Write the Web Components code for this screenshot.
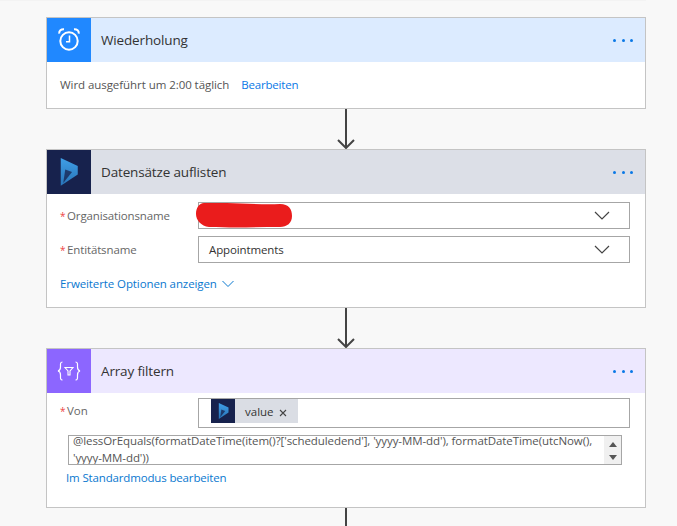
<!DOCTYPE html>
<html><head><meta charset="utf-8"><style>
html,body{margin:0;padding:0}
body{width:677px;height:526px;overflow:hidden;background:#f8f8f8;font-family:"Open Sans","Noto Sans",sans-serif}
</style></head><body>
<flow-canvas>
<flow-card head="#dcebff" iconbg="#2088ff" title="Wiederholung" style="--body-h:46px">
 <svg slot="icon" width="26" height="28" viewBox="0 0 26 28" fill="none" stroke="#fff"><circle cx="13" cy="15" r="8.700" stroke-width="2"/><path d="M13.500 9.500V15.800H10" stroke-width="1.500"/><path d="M3.200 7.600C3 5 5 3 8 3.200M22.800 7.600C23 5 21 3 18 3.200" stroke-width="2"/></svg>
 <schedule-line></schedule-line>
</flow-card>
<flow-arrow></flow-arrow>
<flow-card head="#dcdfe7" iconbg="#17224d" title="Datensätze auflisten" style="--body-h:113px">
 <dyn-logo slot="icon" w="18" h="28"></dyn-logo>
 <form-row label="Organisationsname"><select-box><red-scribble></red-scribble></select-box></form-row>
 <form-row label="Entitätsname" gap="7"><select-box>Appointments</select-box></form-row>
 <more-link></more-link>
</flow-card>
<flow-arrow></flow-arrow>
<flow-card head="#ede8ff" iconbg="#8c66ff" title="Array filtern" style="--body-h:114px">
 <svg slot="icon" width="24" height="20" viewBox="0 0 24 20" fill="none" stroke="#fff" stroke-width="1.200"><path d="M5.500 1C3 1 3.500 3.500 3.500 6 3.500 8.500 3 9.500 1 10c2 .5 2.500 1.500 2.500 4 0 2.500-.5 5 2 5M18.500 1C21 1 20.500 3.500 20.500 6c0 2.500.5 3.500 2.500 4-2 .5-2.500 1.500-2.500 4 0 2.500.5 5-2 5"/><path d="M8 6.500h8l-3 3.500v4h-2v-4z" stroke-width="1.100"/></svg>
 <chip-row></chip-row>
 <expr-box></expr-box>
 <plain-link></plain-link>
</flow-card>
<flow-arrow tail></flow-arrow>
</flow-canvas>
<script>
let gid=0;
function LOGO(w,h,bg){const id='g'+(++gid);return `<svg width="${w}" height="${h}" viewBox="0 0 17.500 28" style="display:block"><defs><linearGradient id="${id}" x1="0" y1="0" x2="0" y2="1"><stop offset="0" stop-color="#3f9fe6"/><stop offset="1" stop-color="#2874b8"/></linearGradient></defs><path d="M.5 0 17.500 8V16.500L.5 27.800z" fill="url(#${id})"/><path d="M5 11.500 11.800 14 3 25z" fill="${bg}" opacity=".75"/></svg>`;}
function def(name, css, html){
  customElements.define(name, class extends HTMLElement{
    constructor(){super();this.attachShadow({mode:'open'}).innerHTML='<style>'+css+'</style>'+(typeof html==='function'?html(this):html);}
  });
}
customElements.define('dyn-logo', class extends HTMLElement{
  connectedCallback(){ if(this.shadowRoot) return; this.attachShadow({mode:'open'}).innerHTML='<style>:host{display:block;line-height:0}</style>'+LOGO(+this.getAttribute('w')||18,+this.getAttribute('h')||28,'#17224d'); }
});
def('flow-canvas',':host{display:flex;flex-direction:column;padding:16px 0 0 46px;width:600px;border-top:1px solid #f3f3f3}','<slot></slot>');
customElements.define('flow-card', class extends HTMLElement{
  connectedCallback(){ if(this.shadowRoot) return; const e=this; this.attachShadow({mode:'open'}).innerHTML=`<style>:host{display:block;width:600px;box-sizing:border-box;border:1px solid #c4c4c4;background:#fff;flex:none}
 .h{display:flex;align-items:center;height:44px;background:var(--hbg)}
 .i{width:44px;height:44px;display:flex;align-items:center;justify-content:center;background:var(--ibg);flex:none}
 .t{margin-left:10px;flex:1;font-size:13.500px;color:#333;letter-spacing:-.15px}
 .d{display:flex;gap:5.300px;margin-right:12px}
 .d b{width:3px;height:3px;border-radius:50%;background:#0a78e6;display:block}
 .b{height:var(--body-h);box-sizing:border-box;overflow:hidden}</style><div class="h" style="--hbg:${e.getAttribute('head')};--ibg:${e.getAttribute('iconbg')}"><div class="i"><slot name="icon"></slot></div><div class="t">${e.getAttribute('title')}</div><div class="d"><b></b><b></b><b></b></div></div><div class="b"><slot></slot></div>`; }
});
customElements.define('flow-arrow', class extends HTMLElement{
  connectedCallback(){ if(this.shadowRoot) return; this.attachShadow({mode:'open'}).innerHTML=`<style>:host{display:block;height:40px;flex:none}:host([tail]){height:20px}svg{display:block;margin-left:288px}</style>`+(this.hasAttribute('tail')?`<svg width="24" height="20"><path d="M12 0V20" stroke="#444" stroke-width="2"/></svg>`:`<svg width="24" height="40" fill="none" stroke="#444" stroke-width="2"><path d="M12 0V39M4 31l8 8 8-8"/></svg>`); }
});
def('schedule-line',`:host{display:flex;gap:12px;padding:15px 0 0 13px;font-size:11.500px;line-height:16px;color:#555;letter-spacing:-.06px}a{color:#0a78e6;letter-spacing:-.2px}`,
 'Wird ausgeführt um 2:00 täglich <a>Bearbeiten</a>');
customElements.define('form-row', class extends HTMLElement{
  connectedCallback(){ if(this.shadowRoot) return; this.attachShadow({mode:'open'}).innerHTML=`<style>:host{display:flex;align-items:center;padding:8px 15px 0 13px;font-size:11.500px;color:#666;letter-spacing:-.13px}
 .s{color:#e44;width:7px;font-size:10px}.l{width:131px}.v{flex:1;min-width:0}</style><span class="s">*</span><span class="l">${this.getAttribute('label')}</span><div class="v"><slot></slot></div>`;
   if(this.getAttribute('gap')) this.style.paddingTop=this.getAttribute('gap')+'px'; }
});
def('select-box',`:host{display:flex;align-items:center;height:27px;box-sizing:border-box;border:1px solid #a6a6a6;padding:0 19px 0 10px;font-size:11.500px;color:#333;position:relative}
 .c{flex:1}svg{display:block}`,
 `<div class="c"><slot></slot></div><svg width="16" height="9" fill="none" stroke="#444" stroke-width="1.200"><path d="M1 1l7 7 7-7"/></svg>`);
def('red-scribble',`:host{position:absolute;left:-3px;top:0;display:block;line-height:0}`,
 `<svg width="96" height="26"><path d="M8 0C30-1 60 2 84 1c9 0 12 5 12 12s-5 11-12 11C62 24 42 25 13 24 5 23 0 17 0 11S3 0 8 0z" fill="#ea1c1c"/></svg>`);
def('more-link',`:host{display:flex;align-items:center;gap:5px;padding:13px 0 0 13px;font-size:11.500px;color:#0a78cf;letter-spacing:-.1px}svg{display:block}`,
 `Erweiterte Optionen anzeigen<svg width="12" height="8" fill="none" stroke="#0a78cf"><path d="M.5 1l5.500 5.500L11.500 1"/></svg>`);
def('chip-row',`:host{display:flex;align-items:flex-start;padding:5px 15px 0 13px;font-size:11.500px;color:#666}
 .s{color:#e44;width:7px;font-size:10px;line-height:27px}.l{width:131px;line-height:26px}
 .v{flex:1;height:30px;box-sizing:border-box;border:1px solid #a6a6a6;padding:0 12px;display:flex;align-items:flex-start}
 .c{display:flex;align-items:center;height:24px;background:#dadde4;color:#333;width:87px}
 .k{width:24px;height:24px;background:#17224d;display:flex;align-items:center;justify-content:center;margin-right:10px}
 svg{display:block}`,
 ()=>`<span class="s">*</span><span class="l">Von</span><div class="v"><div class="c"><div class="k">${LOGO(11,16,'#17224d')}</div>value<svg style="margin:3px 0 0 5px" width="8" height="8" stroke="#444" stroke-width="1.100"><path d="M1 1l6 6M7 1L1 7"/></svg></div></div>`);
def('expr-box',`:host{display:flex;margin:7px 0 0 21px;width:554px;height:30px;box-sizing:border-box;border:1px solid #a6a6a6;font-size:11.500px;color:#555;letter-spacing:-.08px;overflow:hidden}
 .t{flex:1;padding:0 4px;line-height:17px;margin-top:-4px;height:36px}
 .b{width:17px;background:#f0f0f0;display:flex;flex-direction:column;align-items:center;gap:8px;padding-top:6px;box-sizing:border-box}
 i{width:0;height:0;border:4px solid transparent;border-width:0 4px 5px;border-bottom-color:#555;display:block}
 i+i{border-width:5px 4px 0;border-top-color:#555;border-bottom-color:transparent}`,
 `<div class="t">@lessOrEquals(formatDateTime(item()?['scheduledend'], 'yyyy-MM-dd'), formatDateTime(utcNow(), 'yyyy-MM-dd'))</div><div class="b"><i></i><i></i></div>`);
def('plain-link',`:host{display:block;padding:5px 0 0 19px;font-size:11.500px;color:#0a78cf;letter-spacing:-.15px}`,'Im Standardmodus bearbeiten');
</script>
</body></html>
